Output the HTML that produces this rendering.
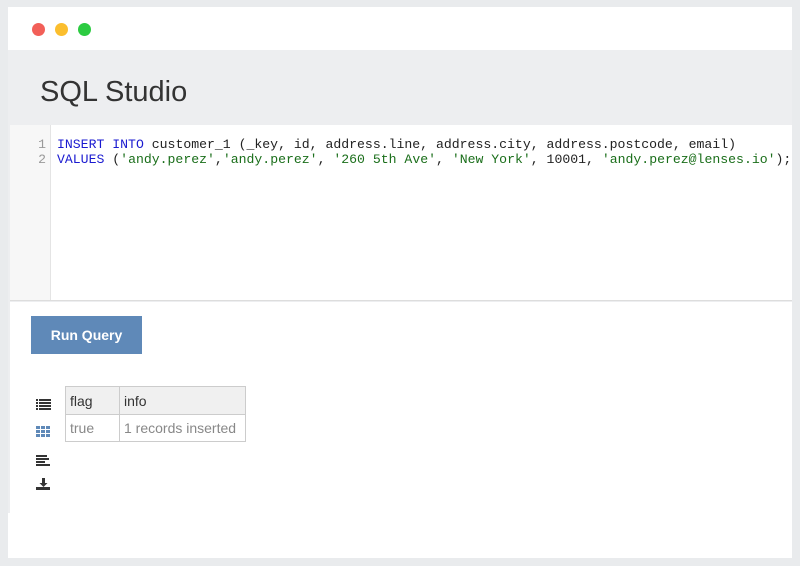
<!DOCTYPE html>
<html><head><style>
*{margin:0;padding:0;box-sizing:border-box}
body{width:800px;height:566px;background:#e9ebed;position:relative;overflow:hidden;font-family:"Liberation Sans",sans-serif}
.win{position:absolute;left:8px;top:7px;width:784px;height:551px;background:#fff}
.bar{position:absolute;left:0;top:0;width:784px;height:43px;background:#fff}
.dot{position:absolute;top:16px;width:13px;height:13px;border-radius:50%}
.gray{position:absolute;left:0;top:43px;width:784px;height:463px;background:#edeef0}
.title{position:absolute;left:32px;top:69px;font-size:29px;color:#333;font-weight:400}
.ed{position:absolute;left:2px;top:118px;width:782px;height:176px;background:#fff;border-bottom:1px solid #ddd;overflow:hidden}
.gut{position:absolute;left:0;top:0;width:41px;height:175px;background:#f7f7f7;border-right:1px solid #e4e4e4}
.code{position:absolute;top:12px;font-family:"Liberation Mono",monospace;font-size:13.17px;line-height:15px;white-space:pre;color:#222}
.ln{left:0;width:36px;text-align:right;color:#999}
.k{color:#1a1ad0}.s{color:#1a6e1a}
.low{position:absolute;left:2px;top:295px;width:782px;height:256px;background:#fff}
.btn{position:absolute;left:21px;top:14px;width:111px;height:38px;background:#5f89b8;color:#fff;font-size:14px;font-weight:bold;line-height:38px;text-align:center}
table{position:absolute;left:55px;top:84px;border-collapse:collapse;font-size:14px;color:#888}
td{border:1px solid #ccc;height:27px;padding:0 4px}
tr:first-child td{background:#f0f0f0;color:#333;height:28px}
</style></head><body>
<div class="win">
<div class="bar">
<div class="dot" style="left:24px;background:#f25f58"></div>
<div class="dot" style="left:47px;background:#fbbe2e"></div>
<div class="dot" style="left:70px;background:#2ccb41"></div>
</div>
<div class="gray"></div>
<div class="title">SQL Studio</div>
<div class="ed"><div class="gut"></div>
<div class="code ln">1
2</div>
<div class="code" style="left:47px"><span class="k">INSERT INTO</span> customer_1 (_key, id, address.line, address.city, address.postcode, email)
<span class="k">VALUES</span> (<span class="s">'andy.perez'</span>,<span class="s">'andy.perez'</span>, <span class="s">'260 5th Ave'</span>, <span class="s">'New York'</span>, 10001, <span class="s">'andy.perez@lenses.io'</span>);</div>
</div>
<div class="low">
<div class="btn">Run Query</div>
<svg style="position:absolute;left:26px;top:96px" width="16" height="95" viewBox="0 0 16 95">
<g fill="#333"><rect x="0" y="1" width="2" height="2"/><rect x="3" y="1" width="12" height="2"/><rect x="0" y="4" width="2" height="2"/><rect x="3" y="4" width="12" height="2"/><rect x="0" y="7" width="2" height="2"/><rect x="3" y="7" width="12" height="2"/><rect x="0" y="10" width="2" height="2"/><rect x="3" y="10" width="12" height="2"/></g>
<g fill="#5f89b8"><rect x="0" y="28" width="4" height="3"/><rect x="5" y="28" width="4" height="3"/><rect x="10" y="28" width="4" height="3"/><rect x="0" y="32" width="4" height="3"/><rect x="5" y="32" width="4" height="3"/><rect x="10" y="32" width="4" height="3"/><rect x="0" y="36" width="4" height="3"/><rect x="5" y="36" width="4" height="3"/><rect x="10" y="36" width="4" height="3"/></g>
<g fill="#333"><rect x="0" y="57" width="11" height="2"/><rect x="0" y="60" width="13" height="2"/><rect x="0" y="63" width="9" height="2"/><rect x="0" y="66" width="14" height="2"/>
<path d="M6 80h3v5h2.5l-4 4-4-4H6z"/><rect x="0" y="89" width="14" height="3"/></g>
</svg>
<table><tr><td style="width:54px">flag</td><td style="width:126px">info</td></tr><tr><td>true</td><td>1 records inserted</td></tr></table>
</div>
</div>
</body></html>
